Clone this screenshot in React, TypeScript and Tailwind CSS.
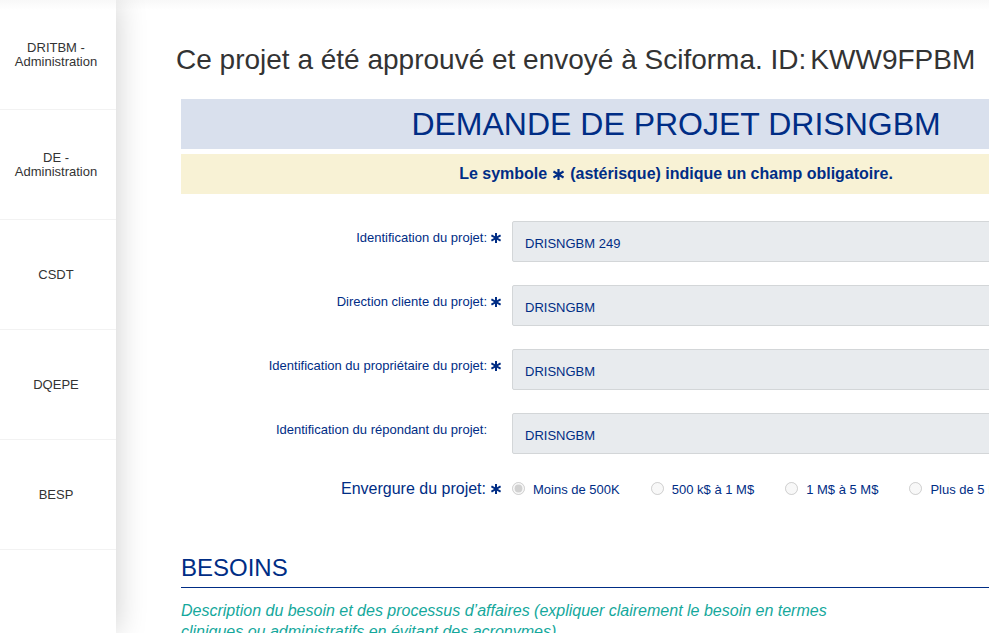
import React from "react";

const nav = ["DRITBM - Administration", "DE - Administration", "CSDT", "DQEPE", "BESP"];

const fields = [
  { id: "projet", label: "Identification du projet:", value: "DRISNGBM 249", required: true },
  { id: "direction", label: "Direction cliente du projet:", value: "DRISNGBM", required: true },
  { id: "proprietaire", label: "Identification du propriétaire du projet:", value: "DRISNGBM", required: true },
  { id: "repondant", label: "Identification du répondant du projet:", value: "DRISNGBM", required: false },
];

const scopes = ["Moins de 500K", "500 k$ à 1 M$", "1 M$ à 5 M$", "Plus de 5 M$"];

function Star({ className }: { className: string }) {
  return (
    <svg viewBox="1 1 10 10" className={className} aria-label="obligatoire" role="img">
      <path d="M6 1v10M1.4 3.3l9.2 5.4M10.6 3.3l-9.2 5.4" stroke="currentColor" strokeWidth="2" strokeLinecap="butt" />
    </svg>
  );
}

export default function App() {
  return (
    <div className="flex h-screen overflow-hidden bg-white font-['Liberation_Sans',Arial,sans-serif] text-[#002d85]">
      <nav className="z-10 w-29 shrink-0 bg-white bg-linear-to-b from-[#f8f8f8] to-white to-[10px] text-[#333] shadow-[0_0_30px_rgba(0,0,0,0.2)]">
        {nav.map((item) => (
          <a
            key={item}
            href="#"
            className="flex h-[110px] items-center justify-center border-b border-[#f2f2f2] pr-4 pl-3 text-center text-[13px] leading-[14px]"
          >
            {item}
          </a>
        ))}
      </nav>
      <main className="min-w-0 flex-1 overflow-hidden bg-linear-to-b from-[#f8f8f8] to-white to-[10px]">
        <h1 className="mt-10 flex gap-1 pl-[60px] text-[28px] leading-10 whitespace-nowrap text-[#333]">
          <span>Ce projet a été approuvé et envoyé à Sciforma. ID:</span>
          <span>KWW9FPBM</span>
        </h1>
        <div className="-mr-[182px] pt-[19px] pl-[65px]">
          <h2 className="h-[50px] bg-[#d9e0ed] text-center text-[32px] leading-[50px]">DEMANDE DE PROJET DRISNGBM</h2>
          <p className="mt-[5px] flex h-10 items-center justify-center gap-1.5 bg-[#f8f2d5] text-[16px] font-bold">
            Le symbole <Star className="size-[11px]" /> (astérisque) indique un champ obligatoire.
          </p>
          <form>
            <div className="mt-[27px] flex flex-col gap-[23px]">
              {fields.map((f) => (
                <div key={f.id} className="flex h-[41px]">
                  <label htmlFor={f.id} className="flex w-80 items-center justify-end pb-2 text-[13px]">
                    {f.label}
                    <span className="ml-1 w-2.5">{f.required && <Star className="size-2.5" />}</span>
                  </label>
                  <input
                    id={f.id}
                    disabled
                    defaultValue={f.value}
                    className="ml-[11px] min-w-0 flex-1 rounded-[2px] border border-[#d3d6d8] bg-[#e8ebee] px-3 pt-1 text-[13px]"
                  />
                </div>
              ))}
            </div>
            <fieldset className="mt-[23px] flex h-6 items-center whitespace-nowrap">
              <legend className="float-left flex w-80 items-center justify-end text-[16px]">
                Envergure du projet:
                <Star className="ml-[5px] size-2.5" />
              </legend>
              <div className="ml-[11px] flex gap-[31px] pt-0.5">
                {scopes.map((s, i) => (
                  <label key={s} className="flex items-center text-[13px]">
                    <input type="radio" name="scope" disabled defaultChecked={i === 0} className="mr-2 mb-[3px] size-[13px]" />
                    {s}
                  </label>
                ))}
              </div>
            </fieldset>
          </form>
          <h3 className="mt-[50px] border-b border-[#002d85] pb-0.5 text-[24px] leading-[34px]">
            BESOINS
          </h3>
          <p className="mt-[12px] w-[680px] text-[16px] leading-[21px] text-[#15a89c] italic">
            Description du besoin et des processus d’affaires (expliquer clairement le besoin en termes cliniques ou
            administratifs en évitant des acronymes)
          </p>
        </div>
      </main>
    </div>
  );
}
